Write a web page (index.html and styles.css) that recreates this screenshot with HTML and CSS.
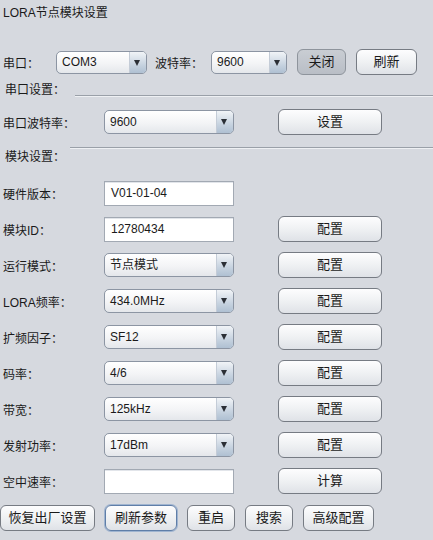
FILE: index.html
```html
<!DOCTYPE html>
<html lang="zh-CN">

<head>
    <meta charset="UTF-8">
    <meta name="viewport" content="width=device-width, initial-scale=1.0">
    <title>LORA节点模块设置</title>
    <link rel="stylesheet" href="styles.css">
</head>

<body>
    <div class="window">
        <div class="title">LORA节点模块设置</div>

        <div class="port-bar">
            <span class="lbl lbl-port">串口：</span>
            <div class="combo combo-port"><span class="value">COM3</span><span class="arrow"></span></div>
            <span class="lbl lbl-baud">波特率：</span>
            <div class="combo combo-baud"><span class="value">9600</span><span class="arrow"></span></div>
            <div class="btn btn-pressed btn-close">关闭</div>
            <div class="btn btn-refresh">刷新</div>
        </div>

        <div class="section section-port">
            <span class="section-name">串口设置：</span>
            <div class="rule"></div>
        </div>

        <div class="row row-port">
            <span class="lbl">串口波特率：</span>
            <div class="combo field"><span class="value">9600</span><span class="arrow"></span></div>
            <div class="btn action">设置</div>
        </div>

        <div class="section section-module">
            <span class="section-name">模块设置：</span>
            <div class="rule"></div>
        </div>

        <div class="module-rows">
            <div class="row">
                <span class="lbl">硬件版本：</span>
                <div class="text field">V01-01-04</div>
            </div>
            <div class="row">
                <span class="lbl">模块ID：</span>
                <div class="text field">12780434</div>
                <div class="btn action">配置</div>
            </div>
            <div class="row">
                <span class="lbl">运行模式：</span>
                <div class="combo field"><span class="value">节点模式</span><span class="arrow"></span></div>
                <div class="btn action">配置</div>
            </div>
            <div class="row">
                <span class="lbl">LORA频率：</span>
                <div class="combo field"><span class="value">434.0MHz</span><span class="arrow"></span></div>
                <div class="btn action">配置</div>
            </div>
            <div class="row">
                <span class="lbl">扩频因子：</span>
                <div class="combo field"><span class="value">SF12</span><span class="arrow"></span></div>
                <div class="btn action">配置</div>
            </div>
            <div class="row">
                <span class="lbl">码率：</span>
                <div class="combo field"><span class="value">4/6</span><span class="arrow"></span></div>
                <div class="btn action">配置</div>
            </div>
            <div class="row">
                <span class="lbl">带宽：</span>
                <div class="combo field"><span class="value">125kHz</span><span class="arrow"></span></div>
                <div class="btn action">配置</div>
            </div>
            <div class="row">
                <span class="lbl">发射功率：</span>
                <div class="combo field"><span class="value">17dBm</span><span class="arrow"></span></div>
                <div class="btn action">配置</div>
            </div>
            <div class="row">
                <span class="lbl">空中速率：</span>
                <div class="text field"></div>
                <div class="btn action">计算</div>
            </div>
        </div>

        <div class="bottom-bar">
            <div class="btn btn-factory">恢复出厂设置</div>
            <div class="btn btn-focus btn-params">刷新参数</div>
            <div class="btn btn-small">重启</div>
            <div class="btn btn-small">搜索</div>
            <div class="btn btn-advanced">高级配置</div>
        </div>
    </div>
</body>

</html>
```

FILE: styles.css
```css
body {
    margin: 0;
    background-color: #d6d9df;
    font-family: 'Liberation Sans', 'Noto Sans CJK SC', sans-serif;
    font-size: 12px;
    color: #1a1a1a;
}

.window {
    width: 433px;
    height: 540px;
    overflow: hidden;
}

.title {
    height: 26px;
    line-height: 26px;
    padding-left: 3px;
}

.lbl {
    white-space: nowrap;
}

/* top serial port bar */

.port-bar {
    display: flex;
    align-items: center;
    height: 26px;
    margin-top: 23px;
}

.lbl-port {
    width: 56px;
    padding-left: 3px;
    box-sizing: border-box;
}

.lbl-baud {
    width: 56px;
    margin-left: 8px;
}

.combo-port {
    width: 91px;
}

.combo-baud {
    width: 76px;
}

.btn-close {
    width: 49px;
    margin-left: 10px;
}

.btn-refresh {
    width: 61px;
    margin-left: 10px;
}

/* combo box */

.combo {
    display: flex;
    height: 23px;
    box-sizing: border-box;
    border: 1px solid #8c95a3;
    border-radius: 5px;
    background: linear-gradient(#ffffff, #f3f4f6 55%, #e4e7eb);
    overflow: hidden;
}

.combo .value {
    flex: 1;
    padding-left: 5px;
    line-height: 21px;
    white-space: nowrap;
}

.combo .arrow {
    width: 16px;
    border-left: 1px solid #c4ccd7;
    background: linear-gradient(#f1f4f7, #c7d3e0 60%, #afc0d2);
    position: relative;
}

.combo .arrow::after {
    content: '';
    position: absolute;
    left: 4px;
    top: 8px;
    border-left: 3.5px solid transparent;
    border-right: 3.5px solid transparent;
    border-top: 6px solid #2b2f36;
}

/* text field */

.text {
    height: 25px;
    box-sizing: border-box;
    border: 1px solid #a2a9b3;
    background-color: #ffffff;
    box-shadow: inset 0 1px 0 #e2e5ea;
    padding-left: 6px;
    line-height: 23px;
}

/* buttons */

.btn {
    height: 26px;
    box-sizing: border-box;
    border: 1px solid #767b83;
    border-radius: 6px;
    background: linear-gradient(#fdfdfe, #eff1f3 50%, #dfe2e7);
    text-align: center;
    line-height: 24px;
    font-size: 13px;
    white-space: nowrap;
}

.btn-pressed {
    border-color: #8e949c;
    background: linear-gradient(#c9cdd3, #b9bec6);
}

.btn-focus {
    border-color: #5f7ea8;
    box-shadow: 0 0 0 1px #9fb4d0;
}

/* section headers */

.section {
    display: flex;
    height: 30px;
}

.section-name {
    padding-left: 5px;
    line-height: 30px;
    white-space: nowrap;
}

.rule {
    flex: 1;
    margin-top: 20px;
    height: 0;
    border-top: 1px solid #9aa0a8;
    border-bottom: 1px solid #eef0f3;
    margin-left: 10px;
}

.section-module {
    height: 36px;
}

.section-module .section-name {
    line-height: 36px;
}

.section-module .rule {
    margin-top: 8px;
    margin-left: 5px;
}

/* form rows */

.row {
    display: flex;
    align-items: center;
    height: 36px;
}

.row-port {
    height: 34px;
}

.row .lbl {
    width: 104px;
    padding-left: 3px;
    box-sizing: border-box;
}

.row .field {
    width: 130px;
}

.row .combo {
    height: 24px;
}

.row .combo .value {
    line-height: 22px;
}

.row .action {
    width: 104px;
    margin-left: 44px;
}

/* bottom buttons */

.bottom-bar {
    display: flex;
    gap: 10px;
    margin-top: 6px;
}

.btn-factory {
    width: 95px;
}

.btn-params {
    width: 72px;
}

.btn-small {
    width: 48px;
}

.btn-advanced {
    width: 71px;
}
```
